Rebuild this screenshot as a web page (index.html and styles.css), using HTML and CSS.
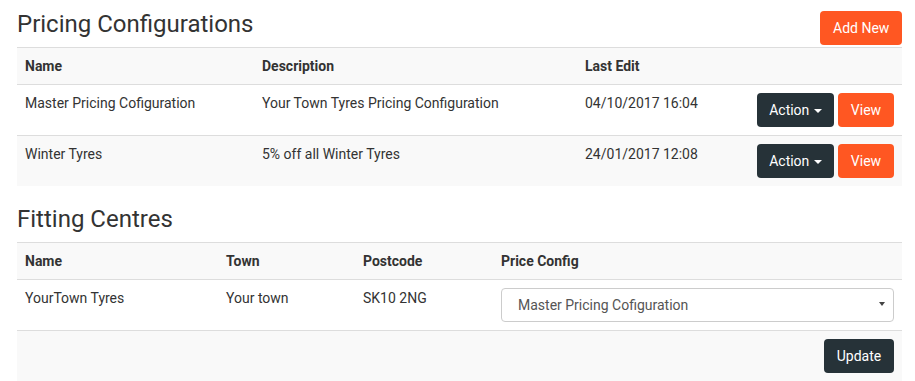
FILE: index.html
```html
<!DOCTYPE html>
<html lang="en">
<head>
<meta charset="utf-8">
<title>Pricing Configurations</title>
<link rel="stylesheet" href="styles.css">
</head>
<body>
<main class="page">
  <section class="section">
    <header class="section-head">
      <h2 class="section-title">Pricing Configurations</h2>
      <button class="btn btn-orange btn-add">Add New</button>
    </header>
    <table class="grid grid-pricing">
      <colgroup>
        <col class="c-name"><col class="c-desc"><col class="c-edit"><col>
      </colgroup>
      <thead>
        <tr><th>Name</th><th>Description</th><th>Last Edit</th><th></th></tr>
      </thead>
      <tbody>
        <tr>
          <td>Master Pricing Cofiguration</td>
          <td>Your Town Tyres Pricing Configuration</td>
          <td>04/10/2017 16:04</td>
          <td class="actions"><button class="btn btn-dark">Action <span class="caret"></span></button><button class="btn btn-orange">View</button></td>
        </tr>
        <tr class="alt">
          <td>Winter Tyres</td>
          <td>5% off all Winter Tyres</td>
          <td>24/01/2017 12:08</td>
          <td class="actions"><button class="btn btn-dark">Action <span class="caret"></span></button><button class="btn btn-orange">View</button></td>
        </tr>
      </tbody>
    </table>
  </section>

  <section class="section section-second">
    <header class="section-head">
      <h2 class="section-title">Fitting Centres</h2>
    </header>
    <table class="grid grid-centres">
      <colgroup>
        <col class="c-cname"><col class="c-town"><col class="c-post"><col>
      </colgroup>
      <thead>
        <tr><th>Name</th><th>Town</th><th>Postcode</th><th>Price Config</th></tr>
      </thead>
      <tbody>
        <tr>
          <td>YourTown Tyres</td>
          <td>Your town</td>
          <td>SK10 2NG</td>
          <td>
            <span class="select-wrap">
              <select class="select">
                <option>Master Pricing Cofiguration</option>
                <option>Winter Tyres</option>
              </select>
            </span>
          </td>
        </tr>
        <tr class="alt">
          <td colspan="4" class="actions"><button class="btn btn-dark">Update</button></td>
        </tr>
      </tbody>
    </table>
  </section>
</main>
</body>
</html>
```

FILE: styles.css
```css
* { box-sizing: border-box; }

html, body {
  margin: 0;
  padding: 0;
  background: #ffffff;
}

body {
  font-family: Roboto, "Liberation Sans", Arial, sans-serif;
  font-size: 14px;
  line-height: 20px;
  color: #333333;
}

.page {
  padding: 0 13px 0 17px;
}

.section-head {
  display: flex;
  justify-content: space-between;
  align-items: flex-start;
}

.section-title {
  margin: 10px 0 9px;
  font-size: 24px;
  line-height: 28px;
  font-weight: 400;
  color: #333333;
}

.section-second .section-title {
  margin-top: 19px;
}

.btn {
  display: inline-block;
  height: 34px;
  padding: 6px 12px;
  border: 1px solid transparent;
  border-radius: 4px;
  font-family: inherit;
  font-size: 14px;
  line-height: 20px;
  color: #ffffff;
  cursor: pointer;
  white-space: nowrap;
}

.btn-orange { background: #ff5722; }
.btn-dark { background: #263238; }

.btn-add {
  margin-top: 11px;
  width: 82px;
}

.caret {
  display: inline-block;
  width: 0;
  height: 0;
  margin-left: 1px;
  vertical-align: middle;
  border-top: 4px solid #ffffff;
  border-left: 4px solid transparent;
  border-right: 4px solid transparent;
}

.grid {
  width: 100%;
  border-collapse: collapse;
  table-layout: fixed;
}

.grid th,
.grid td {
  padding: 8px;
  text-align: left;
  vertical-align: top;
  border-top: 1px solid #dddddd;
}

.grid th {
  font-weight: 700;
}

.grid thead tr,
.grid tr.alt {
  background: #f9f9f9;
}

.c-name { width: 237px; }
.c-desc { width: 323px; }
.c-edit { width: 172px; }

.c-cname { width: 201px; }
.c-town { width: 137px; }
.c-post { width: 138px; }

.grid td.actions {
  text-align: right;
}

.actions .btn + .btn {
  margin-left: 4px;
}

.grid-pricing .btn-dark { width: 77px; padding: 6px 0; }
.grid-pricing .btn-orange { width: 56px; padding: 6px 0; }
.grid-centres .btn-dark { width: 70px; padding: 6px 0; }

.select-wrap {
  position: relative;
  display: block;
}

.select {
  display: block;
  width: 100%;
  height: 34px;
  padding: 6px 30px 6px 16px;
  border: 1px solid #cccccc;
  border-radius: 4px;
  background: #ffffff;
  font-family: inherit;
  font-size: 14px;
  line-height: 20px;
  color: #555555;
  -webkit-appearance: none;
  appearance: none;
}

.select-wrap::after {
  content: "";
  position: absolute;
  right: 9px;
  top: 14px;
  width: 0;
  height: 0;
  border-top: 4px solid #444444;
  border-left: 3px solid transparent;
  border-right: 3px solid transparent;
  pointer-events: none;
}
```
